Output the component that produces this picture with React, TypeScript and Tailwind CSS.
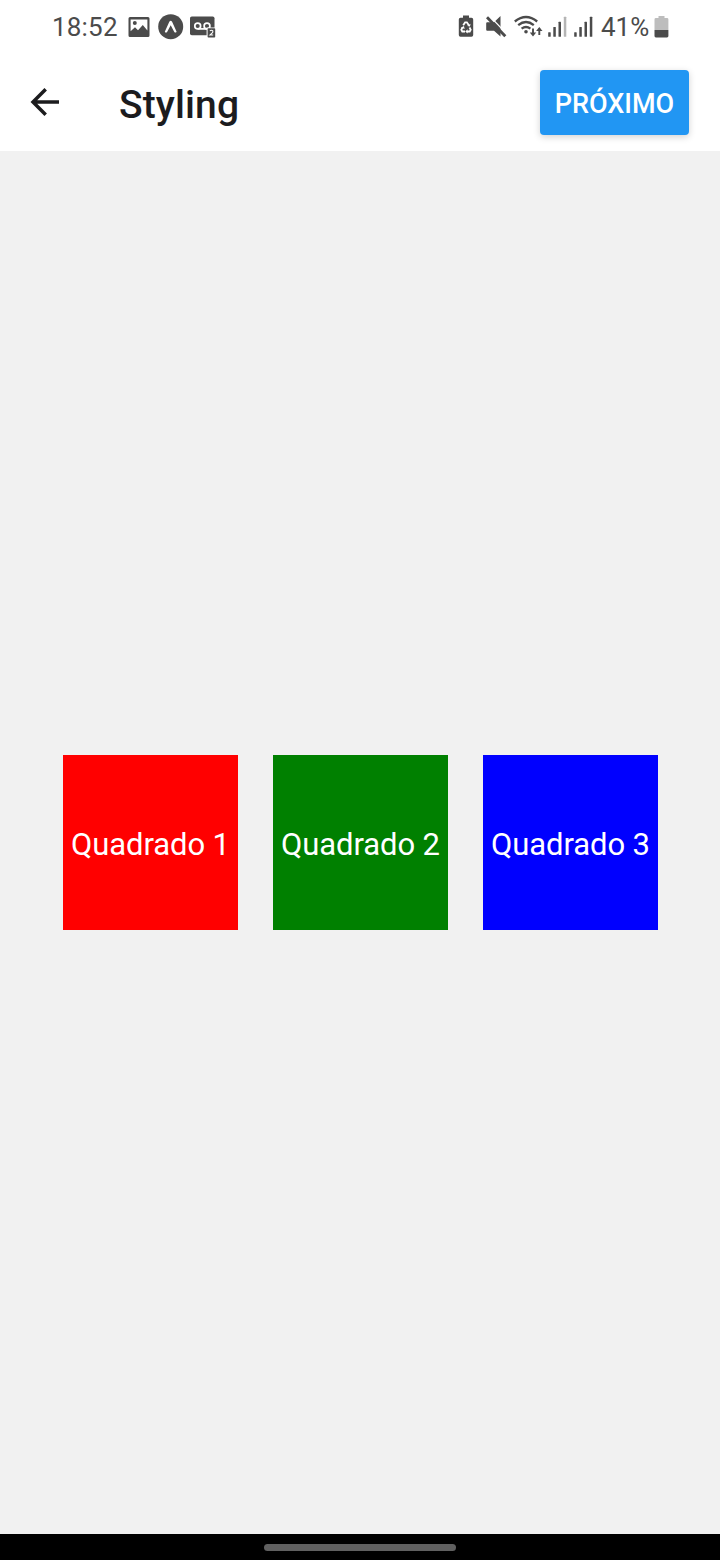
const INK = '#4b4b4b';

function PictureIcon() {
  return (
    <svg width="22" height="20" viewBox="0 0 22 20" className="ml-[10px] mt-[17px] shrink-0">
      <path fillRule="evenodd" fill={INK} d="M2 0h18a1.6 1.6 0 0 1 1.5 1.6v16.8A1.6 1.6 0 0 1 20 20H2a1.6 1.6 0 0 1-1.5-1.6V1.6A1.6 1.6 0 0 1 2 0Zm.6 2.400v11.800l4.400-4 3 3L14.800 8l4.600 5.500V2.400Z" />
      <circle cx="6.800" cy="6" r="2" fill={INK} />
    </svg>
  );
}

function ExpoIcon() {
  return (
    <svg width="26" height="26" viewBox="0 0 26 26" className="ml-[8px] mt-[14px] shrink-0">
      <circle cx="12.700" cy="12.700" r="12.500" fill={INK} />
      <path d="M6.800 17.700 11.300 7.800q1.400-1.900 2.800 0l4.500 9.900q-1 1.600-2.300.2L12.700 11.300l-3.600 6.600q-1.300 1.400-2.300-.2Z" fill="#fff" />
    </svg>
  );
}

function VoicemailIcon() {
  return (
    <svg width="27" height="22" viewBox="0 0 27 22" className="ml-[6px] mt-[16px] shrink-0">
      <rect x="0" y="0.500" width="24.500" height="18.700" rx="1.800" fill={INK} />
      <g fill="none" stroke="#fff" strokeWidth="1.700">
        <circle cx="7.700" cy="10" r="2.900" />
        <circle cx="17" cy="10" r="2.900" />
        <path d="M7.700 12.900H17" />
      </g>
      <path d="M16.600 11.500h9.900V22h-9.900Z" fill="#fff" />
      <rect x="17.600" y="12.300" width="7.600" height="9.200" rx="0.800" fill={INK} />
      <path d="M19.900 14.900q1.600-1.300 2.900 0 .5 1-.8 2.200L20 19h3.200" fill="none" stroke="#fff" strokeWidth="1.100" />
    </svg>
  );
}

function BatterySaverIcon() {
  return (
    <svg width="16" height="22" viewBox="0 0 16 22" className="mt-[15px] shrink-0">
      <path d="M5 .5h6v2.200h2.500a1.700 1.700 0 0 1 1.700 1.700V20a1.700 1.700 0 0 1-1.700 1.700h-11A1.700 1.700 0 0 1 .8 20V4.400A1.700 1.700 0 0 1 2.500 2.700H5Z" fill={INK} />
      <g fill="none" stroke="#fff" strokeWidth="1.800">
        <path d="m5.200 10.300 1.900-3h1.800l1.900 3" />
        <path d="m11.500 12.500 1.200 2.200-1 1.800H9" />
        <path d="m4.500 12.500-1.200 2.200 1 1.800H7" />
      </g>
      <path d="m9.200 11.100 2.800.4.500-2.800ZM9.600 14.200v4.400L7.200 16.500ZM3 12.500l3-1.400.6 3Z" fill="#fff" />
    </svg>
  );
}

function MuteIcon() {
  return (
    <svg width="21" height="22" viewBox="0 0 21 22" className="ml-[12px] mt-[16px] shrink-0">
      <path d="M1.200 6.300H8L14.500 0v20.500L8 14.800H1.200a1 1 0 0 1-1-1V7.300a1 1 0 0 1 1-1Z" fill={INK} />
      <path d="m2.800-.8 19 19.800" stroke="#fff" strokeWidth="1.300" />
      <path d="m1 1.300 18.300 19" stroke={INK} strokeWidth="2.900" />
    </svg>
  );
}

function WifiIcon() {
  return (
    <svg width="29" height="22" viewBox="0 0 29 22" className="ml-[7px] mt-[15px] shrink-0">
      <g fill="none" stroke={INK} strokeWidth="2.300">
        <path d="M.8 6.500Q12 -2.500 23.200 6.500" />
        <path d="M4.200 10.200q7.800-6.300 15.600 0" />
        <path d="M7.600 13.700q4.400-3.500 8.800 0" />
      </g>
      <circle cx="12" cy="16.700" r="1.800" fill={INK} />
      <path d="M19 13.500v6.500M25.300 20v-6.500" stroke={INK} strokeWidth="1.900" />
      <path d="m15.800 17.500 3.200 4 3.200-4ZM22.100 16l3.200-4 3.200 4Z" fill={INK} />
    </svg>
  );
}

function SignalIcon({ full = false }: { full?: boolean }) {
  return (
    <svg width="20" height="21" viewBox="0 0 20 21" className="shrink-0">
      <g fill={INK}>
        <rect x="0.200" y="16.200" width="2.500" height="4.500" rx=".5" />
        <rect x="5.300" y="11" width="2.500" height="9.700" rx=".5" />
        <rect x="10.500" y="5.800" width="2.500" height="14.900" rx=".5" />
        <rect x="15.800" y="0.800" width="2.500" height="19.900" rx=".5" fill={full ? INK : '#b5b5b5'} />
      </g>
    </svg>
  );
}

function StatusBar() {
  return (
    <div className="flex h-[55px] items-start text-[26px] leading-[30px] text-[#4b4b4b]">
      <span className="ml-[52px] mt-[12px] w-[66px] whitespace-nowrap tracking-[0.2px]">18:52</span>
      <PictureIcon />
      <ExpoIcon />
      <VoicemailIcon />
      <div className="ml-auto mr-[51px] flex items-start">
        <BatterySaverIcon />
        <MuteIcon />
        <WifiIcon />
        <div className="ml-[5px] mt-[16px] flex gap-[6px]">
          <SignalIcon />
          <SignalIcon full />
        </div>
        <span className="ml-[7px] mt-[12px] w-[50px] whitespace-nowrap">41%</span>
        <svg width="15" height="22" viewBox="0 0 15 22" className="ml-[3px] mt-[16px] shrink-0">
          <path d="M4.500 0h6v2H13a1.400 1.400 0 0 1 1.400 1.400V14H.5V3.400A1.400 1.400 0 0 1 1.900 2h2.600Z" fill="#bdbdbd" />
          <path d="M.5 14h13.900v6a1.400 1.400 0 0 1-1.400 1.400H1.900A1.400 1.400 0 0 1 .5 20Z" fill={INK} />
        </svg>
      </div>
    </div>
  );
}

function Header() {
  return (
    <header className="flex h-24 items-start">
      <svg width="30" height="30" viewBox="0 0 30 30" className="ml-[30px] mt-[32px] shrink-0">
        <path d="M29 15H3M15.700 2.300 3 15l12.700 12.700" fill="none" stroke="#1c1c1e" strokeWidth="3.500" />
      </svg>
      <h1 className="ml-[59px] mt-[27px] text-[39px] font-medium leading-[46px] tracking-[0.1px] text-[#1c1c1e]">Styling</h1>
      <button className="ml-auto mr-[31px] mt-[15px] flex h-[65px] w-[149px] items-center justify-center rounded-[4px] bg-[#2196f3] pt-[4px] text-[27px] font-medium text-white shadow-[0_2px_7px_rgba(0,0,0,0.18)]">
        PRÓXIMO
      </button>
    </header>
  );
}

function Square({ label, color }: { label: string; color: string }) {
  return (
    <div className={`flex size-[175px] items-center justify-center whitespace-nowrap pl-[1px] pt-[5px] ${color}`}>
      {label}
    </div>
  );
}

export default function App() {
  return (
    <div className="flex h-[1560px] w-[720px] flex-col overflow-hidden bg-white font-['Roboto',sans-serif]">
      <StatusBar />
      <Header />
      <main className="flex flex-1 items-center justify-center gap-[35px] bg-[#f1f1f1] text-[31px] tracking-[-0.1px] text-white">
        <Square label="Quadrado 1" color="bg-[#ff0000]" />
        <Square label="Quadrado 2" color="bg-[#008000]" />
        <Square label="Quadrado 3" color="bg-[#0000ff]" />
      </main>
      <div className="flex h-[26px] items-center justify-center bg-black">
        <div className="h-[7px] w-[192px] rounded-full bg-[#606060]" />
      </div>
    </div>
  );
}
